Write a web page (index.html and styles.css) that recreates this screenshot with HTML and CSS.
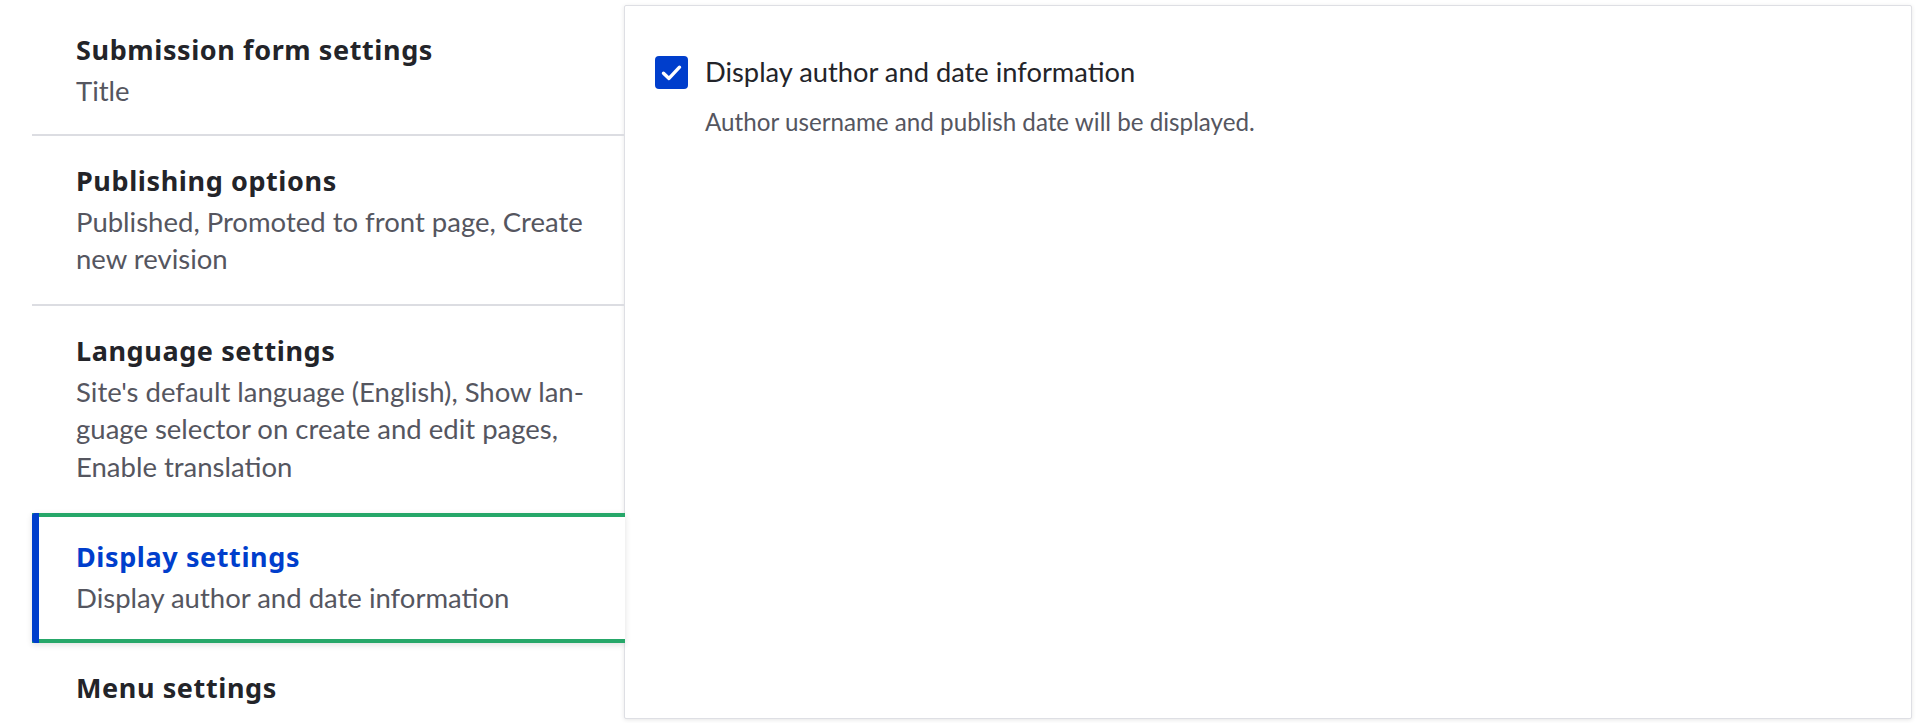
FILE: index.html
```html
<!DOCTYPE html>
<html lang="en">
<head>
<meta charset="utf-8">
<title>Vertical tabs</title>
<link rel="stylesheet" href="styles.css">
</head>
<body>
<div class="layout">
  <ul class="tabs">
    <li class="tab tab-first">
      <div class="tab-title">Submission form settings</div>
      <div class="tab-summary">Title</div>
    </li>
    <li class="tab">
      <div class="tab-title">Publishing options</div>
      <div class="tab-summary">Published, Promoted to front page, Create new revision</div>
    </li>
    <li class="tab">
      <div class="tab-title">Language settings</div>
      <div class="tab-summary">Site's default language (English), Show lan&shy;guage selector on create and edit pages, Enable translation</div>
    </li>
    <li class="tab tab-active">
      <div class="tab-title">Display settings</div>
      <div class="tab-summary">Display author and date information</div>
    </li>
    <li class="tab tab-last">
      <div class="tab-title">Menu settings</div>
    </li>
  </ul>
  <section class="pane">
    <div class="field">
      <span class="checkbox" aria-hidden="true">
        <svg viewBox="0 0 33 33" width="33" height="33"><path d="M8.5 17.2 L14 22.4 L24.5 11.2" fill="none" stroke="#fff" stroke-width="3.4" stroke-linecap="round" stroke-linejoin="round"/></svg>
      </span>
      <div class="field-text">
        <div class="field-label">Display author and date information</div>
        <div class="field-desc">Author username and publish date will be displayed.</div>
      </div>
    </div>
  </section>
</div>
</body>
</html>
```

FILE: styles.css
```css
html, body {
  margin: 0;
  padding: 0;
  background: #ffffff;
}

body {
  font-family: Lato, "Open Sans", "Noto Sans", sans-serif;
  color: #232429;
  height: 723px;
  overflow: hidden;
}

.layout {
  display: flex;
  align-items: flex-start;
  padding: 5px 8px 0 32px;
}

.tabs {
  list-style: none;
  margin: 0;
  padding: 0;
  width: 592px;
  flex: none;
  position: relative;
  z-index: 1;
}

.tab {
  padding: 27px 30px 26px 44px;
  border-bottom: 2px solid #dcdde2;
  position: relative;
}

.tab-first {
  padding-bottom: 24px;
}

.tab-title {
  font-family: "Noto Sans", "Open Sans", Lato, sans-serif;
  font-size: 27px;
  letter-spacing: 0.6px;
  line-height: 36px;
  font-weight: 700;
  color: #232429;
}

.tab-summary {
  margin-top: 4px;
  font-size: 27.5px;
  line-height: 37.5px;
  color: #55565f;
}

.tab:nth-child(3) {
  border-bottom: none;
  padding-bottom: 28px;
}

.tab-active {
  border-top: 4px solid #26a769;
  border-bottom: 4px solid #26a769;
  padding-top: 22px;
  padding-bottom: 22px;
  margin-right: -1px;
  background: #ffffff;
  box-shadow: 0 2px 6px rgba(0, 0, 0, 0.12);
}

.tab-active::before {
  content: "";
  position: absolute;
  left: 0;
  top: -4px;
  bottom: -4px;
  width: 7px;
  background: #003ecc;
  border-radius: 3px 0 0 3px;
}

.tab-active .tab-title {
  color: #003ecc;
}

.tab-last {
  border-bottom: none;
}

.pane {
  flex: 1;
  border: 1px solid #dedfe4;
  border-radius: 2px;
  background: #ffffff;
  box-shadow: 0 1px 4px rgba(0, 0, 0, 0.10);
  padding: 49px 30px 0 30px;
  box-sizing: border-box;
  height: 714px;
}

.field {
  display: flex;
  align-items: flex-start;
  gap: 17px;
}

.checkbox {
  width: 33px;
  height: 33px;
  flex: none;
  background: #003ecc;
  border-radius: 4px;
  display: flex;
  align-items: center;
  justify-content: center;
  margin-top: 1px;
}

.checkbox svg {
  display: block;
}

.field-label {
  font-size: 27.3px;
  line-height: 34px;
  color: #232429;
}

.field-desc {
  margin-top: 18px;
  font-size: 24.2px;
  line-height: 30px;
  color: #55565f;
}
```
